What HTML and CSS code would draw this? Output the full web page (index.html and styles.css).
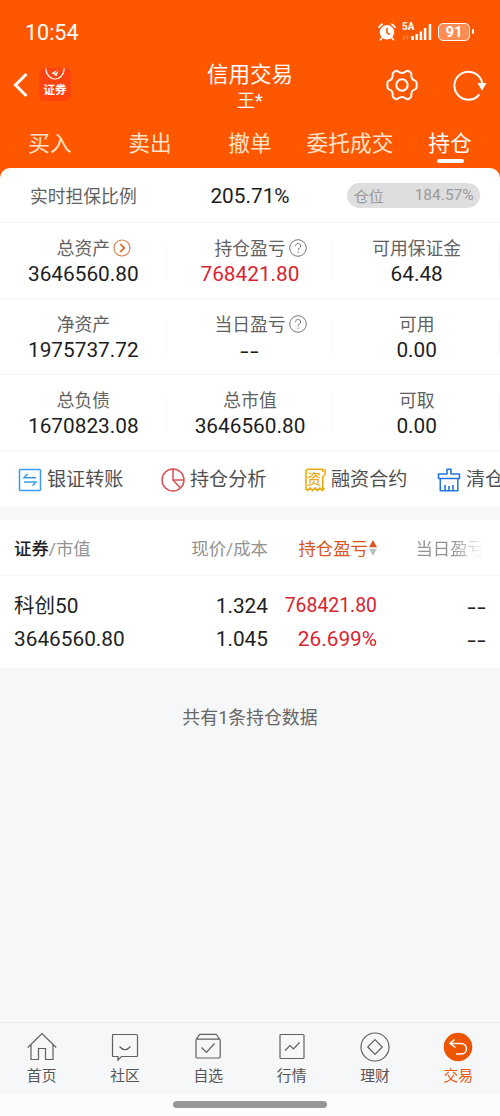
FILE: index.html
```html
<!DOCTYPE html>
<html lang="zh-CN">
<head>
<meta charset="utf-8">
<title>信用交易</title>
<link rel="stylesheet" href="styles.css">
</head>
<body>
<div class="app">
  <header class="header">
    <div class="status">
      <span class="time">10:54</span>
      <div class="indicators">
        <svg class="alarm" width="18" height="18" viewBox="0 0 18 18"><circle cx="9" cy="9.3" r="7.2" fill="#fff"/><path d="M1 4.200A10 10 0 0 1 4.200 1.200M17 4.200A10 10 0 0 0 13.800 1.200M4 15l-1.500 1.800M14 15l1.500 1.800" stroke="#fff" stroke-width="1.700" fill="none" stroke-linecap="round"/><path d="M9 5v4.600l2.700 2" stroke="#ff5700" stroke-width="1.600" fill="none"/></svg>
        <div class="network">
          <span class="net-label">5A</span>
          <svg width="30" height="18" viewBox="0 0 30 18"><path d="M2 12.500v4l-1-1M5 16.500v-4l1 1" stroke="#ff9c69" stroke-width=".8" fill="none"/><path d="M10.500 13v4M14.700 11v6M18.900 8.500v8.500M23.100 5v12M28 1v16" stroke="#fff" stroke-width="2.500"/></svg>
        </div>
        <div class="battery"><span class="battery-level">91</span></div>
      </div>
    </div>
    <div class="titlebar">
      <div class="title-left">
        <svg width="16" height="26" viewBox="0 0 16 26"><path d="M13.500 2L2.500 13l11 11" fill="none" stroke="#fff" stroke-width="3"/></svg>
        <div class="brand">
          <svg width="20" height="13" viewBox="0 0 20 13"><path d="M.8.500A9.200 10.500 0 0 0 19.200.500" fill="none" stroke="#fff" stroke-width="1.200"/><path d="M6 5.500L12 2l-3 4zM8.500 6.500L13.500 3l-2 5z" fill="#fff"/></svg>
          <span>证券</span>
        </div>
      </div>
      <div class="title-center">
        <div class="title">信用交易</div>
        <div class="user">王*</div>
      </div>
      <div class="title-right">
        <svg width="32" height="32" viewBox="0 0 32 32" fill="none" stroke="#fff" stroke-width="2" stroke-linejoin="round"><path d="M9.400 2.200Q11 1.300 12.500 2.700Q16 5.300 19.500 2.700Q21 1.300 22.600 2.200L24.200 3.200Q25.700 4 25.300 6Q25.200 10.500 29 11.600Q30.600 12 30.600 14V18Q30.600 20 29 20.400Q25.200 21.500 25.300 26Q25.700 28 24.200 28.800L22.600 29.800Q21 30.700 19.500 29.300Q16 26.700 12.500 29.300Q11 30.700 9.400 29.800L7.800 28.800Q6.300 28 6.700 26Q6.800 21.500 3 20.400Q1.400 20 1.400 18V14Q1.400 12 3 11.600Q6.800 10.500 6.700 6Q6.300 4 7.800 3.200Z"/><circle cx="16" cy="16" r="5.700"/></svg>
        <svg width="34" height="32" viewBox="0 0 34 32"><path d="M26.300 25.500A14 14 0 1 1 29.200 14.500" fill="none" stroke="#fff" stroke-width="2"/><path d="M24.500 14H33.500L29 21.800Z" fill="#fff"/></svg>
      </div>
    </div>
    <nav class="tabs">
      <span class="tab">买入</span><span class="tab">卖出</span><span class="tab">撤单</span><span class="tab">委托成交</span><span class="tab active">持仓</span>
    </nav>
  </header>

  <main class="main">
    <section class="card">
      <div class="ratio">
        <span class="label">实时担保比例</span>
        <span class="num">205.71%</span>
        <div class="position"><span class="position-name">仓位</span><span>184.57%</span></div>
      </div>
      <div class="stats">
        <div class="stat"><div class="label">总资产<svg class="hint" width="18" height="18" viewBox="0 0 18 18" fill="none"><circle cx="9" cy="9" r="8" stroke="#d97a45" stroke-width="1.100"/><path d="M7.200 5l4 4-4 4" stroke="#dc5c20" stroke-width="1.700"/></svg></div><div class="num">3646560.80</div></div>
        <div class="stat"><div class="label">持仓盈亏<svg class="hint" width="18" height="18" viewBox="0 0 18 18" fill="none" stroke="#777"><circle cx="9" cy="9" r="8.300"/><path d="M6.400 7.200C6.400 3.600 11.700 3.700 11.700 7C11.700 8.900 9.100 8.900 9.100 11.200M9.100 12.500v1.400"/></svg></div><div class="num red">768421.80</div></div>
        <div class="stat"><div class="label">可用保证金</div><div class="num">64.48</div></div>
        <div class="stat"><div class="label">净资产</div><div class="num">1975737.72</div></div>
        <div class="stat"><div class="label">当日盈亏<svg class="hint" width="18" height="18" viewBox="0 0 18 18" fill="none" stroke="#777"><circle cx="9" cy="9" r="8.300"/><path d="M6.400 7.200C6.400 3.600 11.700 3.700 11.700 7C11.700 8.900 9.100 8.900 9.100 11.200M9.100 12.500v1.400"/></svg></div><div class="num dashes">--</div></div>
        <div class="stat"><div class="label">可用</div><div class="num">0.00</div></div>
        <div class="stat"><div class="label">总负债</div><div class="num">1670823.08</div></div>
        <div class="stat"><div class="label">总市值</div><div class="num">3646560.80</div></div>
        <div class="stat"><div class="label">可取</div><div class="num">0.00</div></div>
      </div>
      <div class="actions">
        <div class="action"><svg width="24" height="24" viewBox="0 0 24 24" fill="none" stroke="#3b9de8" stroke-width="1.500"><rect x="1.500" y="1.500" width="21" height="21" rx="1"/><path d="M9.500 6L6 9.800h12M6 14h12l-3.500 3.800"/></svg><span>银证转账</span></div>
        <div class="action"><svg width="24" height="24" viewBox="0 0 24 24" fill="none" stroke="#d95058" stroke-width="1.500"><circle cx="12" cy="12" r="11"/><path d="M12 1v11h11M12 12l7.500 8"/></svg><span>持仓分析</span></div>
        <div class="action"><div class="contract"><svg width="22" height="24" viewBox="0 0 22 24" fill="none" stroke="#eaaa15" stroke-width="1.600"><path d="M2 18V4Q2 1.200 4 1.200H18.800V4M18.800 8h2M18.800 8v14M2 18v4M1.500 20l2 2.500 2.500-2.500 2.500 2.500 2.500-2.500 2.500 2.500 2.500-2.500 2.500 2.500 2-2.500M21 1.200V7"/></svg><span class="contract-mark">资</span></div><span>融资合约</span></div>
        <div class="action"><svg width="24" height="24" viewBox="0 0 24 24" fill="none" stroke="#2377dc" stroke-width="1.600" stroke-linejoin="round"><path d="M10 6V1.200h4V6h8.500v4.500h-21V6zM3.300 10.500V22.800h17.500V10.500M8 22v-5M12 22v-4M16 22v-5"/></svg><span>清仓</span></div>
      </div>
    </section>

    <section class="holdings">
      <div class="holdings-head">
        <span><b class="strong">证券</b>/市值</span>
        <span>现价/成本</span>
        <span class="sort">持仓盈亏<svg width="8" height="18" viewBox="0 0 8 18"><path d="M4 1L8 8.300H0z" fill="#d9541c"/><path d="M4 17L8 9.700H0z" fill="#b9c3bd"/></svg></span>
        <span class="faded">当日盈亏</span>
      </div>
      <div class="holding">
        <div><span class="cjk">科创</span>50</div><div>1.324</div><div class="red profit">768421.80</div><div class="dashes">--</div>
        <div>3646560.80</div><div>1.045</div><div class="red">26.699%</div><div class="dashes">--</div>
      </div>
    </section>
    <p class="summary">共有1条持仓数据</p>
  </main>

  <nav class="bottom">
    <div class="item"><svg width="30" height="30" viewBox="0 0 30 30"><path d="M.8 15.500L15 1.500l14.200 14M4 12.500V27.500h7.500V16.500h7V27.500H26V12.500"/></svg><span>首页</span></div>
    <div class="item"><svg width="30" height="30" viewBox="0 0 30 30"><path d="M3.500 2.500h23q1 0 1 1v20q0 1-1 1H11.500L8 28V24.500H3.500q-1 0-1-1v-20q0-1 1-1zM9.500 14.500q5.500 6.500 11 0"/></svg><span>社区</span></div>
    <div class="item"><svg width="30" height="30" viewBox="0 0 30 30"><path d="M3 8.500q0-1 .5-1.600L6 3.300q.6-1 1.500-1H22.500q1 0 1.500 1L26.500 7q.7.700.7 1.600V24.800q0 1.200-1.200 1.200H4.200Q3 26 3 24.800zM3.200 7.200h23.700M8.500 15.500l5 5 8-9"/></svg><span>自选</span></div>
    <div class="item"><svg width="30" height="30" viewBox="0 0 30 30"><rect x="3" y="2.500" width="24" height="24" rx="1"/><path d="M8 18.500l5-5 3.500 3.500 6-6.500"/></svg><span>行情</span></div>
    <div class="item"><svg width="30" height="30" viewBox="0 0 30 30"><circle cx="15" cy="15" r="14"/><path d="M15 7.700l7.300 7.300-7.300 7.300L7.700 15z"/></svg><span>理财</span></div>
    <div class="item current"><svg width="30" height="30" viewBox="0 0 30 30"><circle class="disc" cx="15" cy="15" r="14.300"/><path class="arrow" d="M11.500 7.500L7 11.500l5.500 4M7 11.500H17.500C25.500 11.500 25.500 22 17.500 22H13"/></svg><span>交易</span></div>
  </nav>
  <div class="gesture"><div class="gesture-bar"></div></div>
</div>
</body>
</html>
```
FILE: styles.css
```css
* { box-sizing: border-box; }

body {
  margin: 0;
  font-family: Roboto, "Noto Sans CJK SC", sans-serif;
  color: #222;
}

svg { display: block; flex: none; }

.app {
  width: 500px;
  height: 1116px;
  display: flex;
  flex-direction: column;
  background: #f6f7f9;
  overflow: hidden;
}

.header {
  height: 178px;
  flex: none;
  background: #ff5700;
  color: #fff;
}

.status {
  height: 60px;
  padding: 4px 26px 0 25px;
  display: flex;
  align-items: center;
  justify-content: space-between;
}
.time { font-size: 21.5px; }
.indicators { display: flex; align-items: center; gap: 6px; }
.network { position: relative; }
.net-label {
  position: absolute;
  left: 0;
  top: -1px;
  font-size: 10px;
  line-height: 10px;
  font-weight: 700;
}
.battery {
  position: relative;
  width: 32px;
  height: 18px;
  margin-right: 4px;
  border: 1.5px solid #fff;
  border-radius: 5px;
  background: #ff8c52;
  display: flex;
  align-items: center;
  justify-content: center;
}
.battery::after {
  content: "";
  position: absolute;
  right: -5px;
  top: 5px;
  width: 2px;
  height: 5px;
  border-radius: 1px;
  background: #fff;
}
.battery-level { font-size: 15px; line-height: 16px; font-weight: 700; }

.titlebar {
  height: 60px;
  display: grid;
  grid-template-columns: 150px 1fr 150px;
  padding: 0 13px;
}
.title-left { display: flex; gap: 10px; padding-top: 12px; }
.brand {
  width: 32px;
  height: 33px;
  margin-top: -4px;
  border-radius: 5px;
  background: #ff4410;
  display: flex;
  flex-direction: column;
  align-items: center;
}
.brand span { font: 700 11.5px/17px "Noto Sans CJK SC", sans-serif; }
.title-center { padding-top: 1px; text-align: center; }
.title { font-size: 21.5px; line-height: 28px; white-space: nowrap; }
.user { font-size: 18px; line-height: 24px; }
.title-right {
  display: flex;
  justify-content: flex-end;
  gap: 35px;
  padding-top: 9px;
}

.tabs { display: grid; grid-template-columns: repeat(5, 1fr); }
.tab {
  height: 48px;
  display: flex;
  flex-direction: column;
  align-items: center;
  font-size: 21.7px;
  line-height: 47px;
  color: #ffe3c8;
}
.tab.active { color: #fff; }
.tab.active::after {
  content: "";
  flex: none;
  width: 27px;
  height: 4px;
  margin-top: -8px;
  border-radius: 2px;
  background: #fff;
}

.main { flex: 1; margin-top: -10px; }
.card { background: #fff; border-radius: 10px 10px 0 0; }

.label {
  display: flex;
  align-items: center;
  font-size: 17.8px;
  line-height: 25px;
  color: #626262;
}
.num { font-size: 20.8px; line-height: 28px; color: #1d1d1d; }
.red { color: #d8242f; }
.hint { margin: 0 -21px 0 3px; }

.ratio {
  height: 55px;
  display: grid;
  grid-template-columns: repeat(3, 1fr);
  align-items: center;
  justify-items: center;
  border-bottom: 1px solid #f3f3f3;
}
.ratio .label { padding-top: 2px; }
.ratio .num { padding-top: 2px; }
.position {
  width: 133px;
  height: 25px;
  margin-right: 7px;
  padding: 0 6px 0 7px;
  border-radius: 13px;
  background: #dedede;
  color: #999;
  display: flex;
  align-items: center;
  justify-content: space-between;
  font-size: 15.5px;
}
.position-name { font-size: 15px; }

.stats { display: grid; grid-template-columns: repeat(3, 1fr); }
.stat {
  position: relative;
  height: 76px;
  padding-top: 12px;
  display: flex;
  flex-direction: column;
  align-items: center;
  border-bottom: 1px solid #f5f5f5;
}
.stat .label { padding-top: 1px; height: 25px; }
.stat::after {
  content: "";
  position: absolute;
  right: 0;
  top: 21px;
  width: 1px;
  height: 34px;
  background: #f7f7f7;
}
.dashes { font-size: 31px; font-weight: 300; letter-spacing: 1px; }
.stat .dashes { line-height: 32px; }

.actions {
  height: 55px;
  padding: 2px 0 0 18px;
  display: flex;
  align-items: center;
  overflow: hidden;
}
.action {
  width: 143px;
  flex: none;
  display: flex;
  align-items: center;
  gap: 5px;
  font-size: 19.1px;
  line-height: 26px;
  color: #505050;
  white-space: nowrap;
}
.action:nth-child(3) { width: 133px; }
.action:nth-child(4) { width: auto; }
.contract { position: relative; }
.contract-mark {
  position: absolute;
  left: 3px;
  top: 3px;
  font-size: 14px;
  line-height: 16px;
  font-weight: 500;
  color: #eaaa15;
}

.holdings { margin-top: 14px; background: #fff; }
.holdings-head, .holding {
  display: grid;
  grid-template-columns: 144px 110px 109px 108px;
  padding: 0 15px 0 14px;
  white-space: nowrap;
}
.holdings-head {
  height: 56px;
  align-items: center;
  border-bottom: 1px solid #f5f5f5;
  font-size: 17.4px;
  color: #929292;
}
.holdings-head > :nth-child(n + 2), .holding > :not(:nth-child(4n + 1)) { text-align: right; }
.strong { font-weight: 500; color: #222; }
.sort {
  display: flex;
  align-items: center;
  justify-content: flex-end;
  gap: 1px;
  color: #d9541c;
}
.holdings-head .faded {
  color: transparent;
  background: linear-gradient(90deg, #929292 70%, #fff 98%);
  background-clip: text;
}
.holding {
  height: 92px;
  padding-top: 13px;
  grid-auto-rows: 33px;
  font-size: 20.8px;
  line-height: 34px;
}
.profit { font-size: 19.4px; }
.holding .dashes { line-height: 38px; height: 33px; margin-right: -2px; }
.cjk { font-size: 20.5px; }

.summary {
  margin: 37px 0 0;
  text-align: center;
  font-size: 17.9px;
  line-height: 26px;
  color: #666;
}

.bottom {
  height: 72px;
  flex: none;
  display: grid;
  grid-template-columns: repeat(6, 1fr);
  border-top: 1px solid #ebecee;
}
.item {
  display: flex;
  flex-direction: column;
  align-items: center;
  padding-top: 9px;
  font-size: 14.8px;
  line-height: 29px;
  color: #555;
}
.item svg { fill: none; stroke: #606060; stroke-width: 1.2; }
.item.current { color: #e75a10; }
.item .disc { fill: #ee5500; stroke: none; }
.item .arrow { stroke: #fff; stroke-width: 1.5; }

.gesture {
  height: 22px;
  flex: none;
  display: flex;
  justify-content: center;
  padding-top: 7px;
  background: #fcfcfc;
}
.gesture-bar { width: 154px; height: 7px; border-radius: 4px; background: #969696; }
```
